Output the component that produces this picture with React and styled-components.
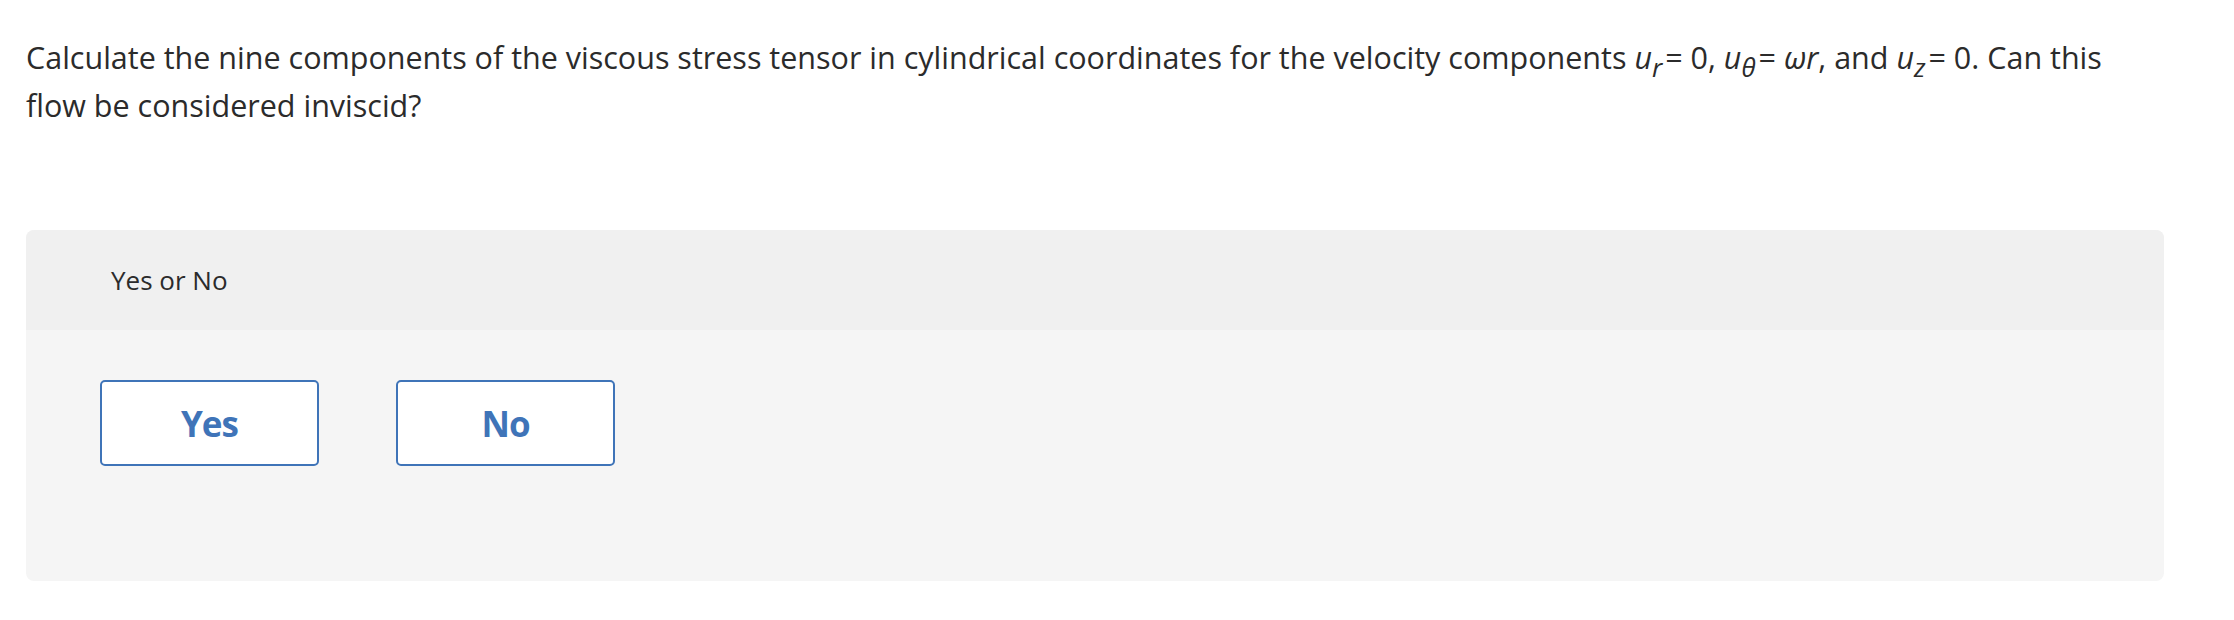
import React from "react";
import styled, { createGlobalStyle } from "styled-components";

const Global = createGlobalStyle`
  html, body { margin: 0; padding: 0; background: #ffffff; }
  body { font-family: "Open Sans", "Noto Sans", sans-serif; color: #2b2b2b; }
`;

const Page = styled.div`
  padding: 33px 70px 40px 26px;
`;

const Question = styled.p`
  margin: 0;
  font-size: 30.5px;
  line-height: 48px;
  color: #2b2b2b;
  max-width: 2110px;
`;

const Var = styled.i`
  font-style: italic;
`;

const Sub = styled.sub`
  font-size: 0.85em;
  font-style: italic;
  vertical-align: -0.3em;
  line-height: 0;
  margin-right: 3px;
`;

const Phrase = styled.span``;

const Panel = styled.section`
  margin-top: 101px;
  width: 2138px;
  border-radius: 8px;
  overflow: hidden;
  background: #f5f5f5;
`;

const PanelHeader = styled.div`
  height: 100px;
  display: flex;
  align-items: center;
  padding-left: 85px;
  background: #f0f0f0;
  font-size: 26px;
  color: #2b2b2b;
`;

const PanelBody = styled.div`
  display: flex;
  gap: 77px;
  padding: 50px 0 115px 74px;
`;

const Choice = styled.button`
  width: 219px;
  height: 86px;
  box-sizing: border-box;
  border: 2px solid #3f74b8;
  border-radius: 5px;
  background: #ffffff;
  color: #3f74b8;
  font-family: "Open Sans", "Noto Sans", sans-serif;
  font-weight: 700;
  font-size: 35px;
  letter-spacing: -1px;
  cursor: pointer;
  padding: 0;
`;

export default function App() {
  return (
    <>
      <Global />
      <Page>
        <Question>
          <Phrase>
            Calculate the nine components of the viscous stress tensor in cylindrical
            coordinates for the velocity components
          </Phrase>{" "}
          <Var>u</Var>
          <Sub>r</Sub>
          <Phrase>= 0,</Phrase> <Var>u</Var>
          <Sub>θ</Sub>
          <Phrase>=</Phrase> <Var>ωr</Var>
          <Phrase>, and</Phrase> <Var>u</Var>
          <Sub>z</Sub>
          <Phrase>= 0. Can this</Phrase>{" "}
          <Phrase>flow be considered inviscid?</Phrase>
        </Question>
        <Panel>
          <PanelHeader>Yes or No</PanelHeader>
          <PanelBody>
            <Choice>Yes</Choice>
            <Choice>No</Choice>
          </PanelBody>
        </Panel>
      </Page>
    </>
  );
}
